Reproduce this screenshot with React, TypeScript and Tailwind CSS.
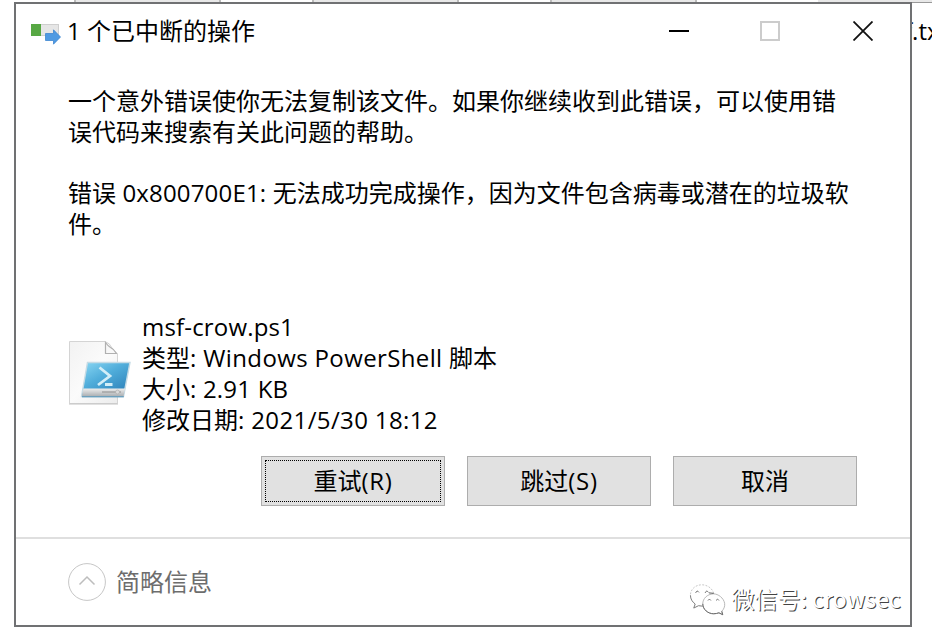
import React from "react";

const latin = "font-['Open_Sans','Noto_Sans_CJK_SC',sans-serif]";

function TransferIcon() {
  return (
    <svg width="30" height="22" viewBox="0 0 30 22">
      <rect x="0.5" y="1.5" width="27" height="11" fill="#e6e6e6" stroke="#cfcfcf" />
      <rect x="0" y="1" width="10" height="12" fill="#57a844" />
      <path d="M14.500 10.500H22.500V6.800L29.500 14L22.500 21.200V17.500H14.500Z" fill="#4f9ae2" stroke="#3f86d0" strokeWidth="0.8" />
    </svg>
  );
}

function ScriptFileIcon() {
  return (
    <svg width="64" height="66" viewBox="0 0 64 66">
      <defs>
        <linearGradient id="page" x1="0" y1="0" x2="1" y2="1">
          <stop offset="0" stopColor="#f2f2f2" />
          <stop offset="0.5" stopColor="#fbfbfb" />
          <stop offset="1" stopColor="#ececec" />
        </linearGradient>
        <linearGradient id="screen" x1="0" y1="0" x2="0.8" y2="1">
          <stop offset="0" stopColor="#8bd8f4" />
          <stop offset="0.45" stopColor="#51aedb" />
          <stop offset="1" stopColor="#2b7fb8" />
        </linearGradient>
        <linearGradient id="bar" x1="0" y1="0" x2="0" y2="1">
          <stop offset="0" stopColor="#ededed" />
          <stop offset="1" stopColor="#a9adb0" />
        </linearGradient>
      </defs>
      <path d="M1.500 1.500H37Q42 3 44 8L49.500 14V63.500H1.500Z" fill="url(#page)" stroke="#d4d4d4" />
      <path d="M1 64H50" stroke="#c4c4c4" />
      <path d="M37.500 2.500V13.500H48.500Q46 9 42.500 7.500Q40 6 37.500 2.500Z" fill="#f8f8f8" stroke="#b0b0b0" strokeWidth="1.200" />
      <path d="M19.500 22.500H62L55.500 56.500H13.500Z" fill="url(#screen)" stroke="#c5dbe5" strokeWidth="1.400" />
      <path d="M15.300 48.500H57L55.500 56.500H14Z" fill="url(#bar)" />
      <path d="M14 56.800H55.800" stroke="#4c91b5" />
      <path d="M34 52H53" stroke="#9a9a9a" strokeWidth="1.200" />
      <circle cx="49.500" cy="52" r="2" fill="#d9d9d9" stroke="#aaa" strokeWidth="0.600" />
      <path d="M31.500 27.500L42 36L30 45M37 44.500H44.500" fill="none" stroke="#d3eef8" strokeWidth="2.800" />
    </svg>
  );
}

function WeChatIcon() {
  return (
    <svg width="38" height="36" viewBox="0 0 40 36" fill="none" strokeWidth="1">
      <path d="M26 11C24.500 5.500 19 2 13.500 2C6.500 2 1.500 7 1.500 13" stroke="#c4c4c4" strokeDasharray="2 1.500" />
      <path d="M1.500 13C1.500 17 3.500 20 6.500 22.200L5 26.500L10 24L14.500 24.500" stroke="#777" />
      <path d="M25.500 11.500C19 12 14.500 16.500 14.500 22C14.500 28 20 32.500 26 32.500C28 32.500 30 32 31.500 31.500L35.500 33.500L34.500 29.800C36.500 28 38 25 37.500 21.500C36.500 16 31 11.500 25.500 11.500Z" fill="#fff" stroke="#b4b4b4" />
      <path d="M14.500 22C14.500 28 20 32.500 26 32.500C28 32.500 30 32 31.500 31.500L35.500 33.500L34.500 29.800" stroke="#666" />
      <path d="M21 10.500Q23 10.700 26 11" stroke="#555" />
      <path d="M7 10.500Q8.500 7 10.500 10M17 10.500Q18.500 7 20.500 10M20 18.500Q21.500 15.500 23 18.500M28.500 18.500Q30 15.500 31.500 18.500" stroke="#666" />
    </svg>
  );
}

function Button({ children, focused = false }: { children: React.ReactNode; focused?: boolean }) {
  return (
    <button className="h-[50px] w-[184px] border border-[#adadad] bg-[#e1e1e1] p-[3px]">
      <span className={`flex h-full w-full items-center justify-center whitespace-nowrap border pb-px ${focused ? "border-dotted border-black" : "border-transparent"}`}>
        {children}
      </span>
    </button>
  );
}

function BackTab() {
  return <div className="h-[2px] w-[147px] shrink-0 border-x-2 border-[#bcbcbc] bg-[#e8e8e8]" />;
}

export default function App() {
  return (
    <div className={`relative h-[642px] w-[932px] overflow-hidden bg-white text-[24px] leading-[31px] text-black ${latin}`}>
      <div className="flex h-[2px] gap-[91px] pl-[74px]">
        <BackTab />
        <BackTab />
        <BackTab />
        <div className="ml-[30px] h-[3px] flex-1 border-b border-[#999] bg-[#e8e8e8]" />
      </div>
      <div className="absolute left-[904px] top-[15px] whitespace-nowrap">f.tx</div>

      <div className="relative ml-[14px] flex h-[625px] w-[898px] flex-col border-2 border-[#707173] bg-white">
        <header className="flex h-[54px] shrink-0 items-center">
          <div className="ml-[15px] mt-[6px]"><TransferIcon /></div>
          <h1 className="-mt-px ml-[6px] flex-1 whitespace-nowrap">1 个已中断的操作</h1>
          <div className="mr-[37px] flex items-center">
            <div className="h-[2px] w-5 bg-black" />
            <div className="ml-[71px] h-5 w-5 border-2 border-[#cccccc]" />
            <svg className="ml-[73px]" width="20" height="20" viewBox="0 0 20 20"><path d="M0.500 0.500L19.500 19.500M19.500 0.500L0.500 19.500" stroke="#111" strokeWidth="1.800" /></svg>
          </div>
        </header>

        <main className="h-[479px] shrink-0 pl-[52px] pt-[27px]">
          <p className="whitespace-nowrap">
            一个意外错误使你无法复制该文件。如果你继续收到此错误，可以使用错
            <br />
            误代码来搜索有关此问题的帮助。
          </p>
          <p className="mt-[30px] whitespace-nowrap">
            错误<span className="tracking-[0.17px]"> 0x800700E1: </span>无法成功完成操作，因为文件包含病毒或潜在的垃圾软
            <br />
            件。
          </p>
          <section className="mt-[72px] flex">
            <div className="mt-[29px] w-[74px]"><ScriptFileIcon /></div>
            <div className="whitespace-nowrap">
              <div><span className="tracking-[0.17px]">msf-crow.ps1</span></div>
              <div>类型<span className="tracking-[0.37px]">: Windows PowerShell </span>脚本</div>
              <div>大小<span className="tracking-[0.2px]">: 2.91 KB</span></div>
              <div>修改日期<span className="tracking-[0.37px]">: 2021/5/30 18:12</span></div>
            </div>
          </section>
          <div className="ml-[193px] mt-[21px] flex gap-[22px]">
            <Button focused><span>重试<span className="tracking-[0.7px]">(R)</span></span></Button>
            <Button><span>跳过<span className="tracking-[0.7px]">(S)</span></span></Button>
            <Button>取消</Button>
          </div>
        </main>

        <footer className="flex flex-1 border-t-2 border-[#dfdfdf] text-[#6d6d6d]">
          <div className="ml-[52px] mt-[24px] flex h-[38px] flex-1 items-center gap-[10px]">
            <svg width="38" height="38" viewBox="0 0 38 38" fill="none"><circle cx="19" cy="19" r="18.400" stroke="#c6c6c6" /><path d="M11.500 21.500L19 14L26.500 21.500" stroke="#bdbdbd" strokeWidth="1.500" /></svg>
            <span className="-mt-px">简略信息</span>
          </div>
          <div className="mr-[9px] mt-[41px] flex h-[36px] items-center gap-[4px]">
            <div className="mt-[4px]"><WeChatIcon /></div>
            <span className="whitespace-nowrap font-['Noto_Sans_CJK_SC',sans-serif] text-[23px] font-normal text-white [text-shadow:1px_1px_0.5px_#444]">微信号: <span className="tracking-[0.15px]">crowsec</span></span>
          </div>
        </footer>
      </div>
    </div>
  );
}
